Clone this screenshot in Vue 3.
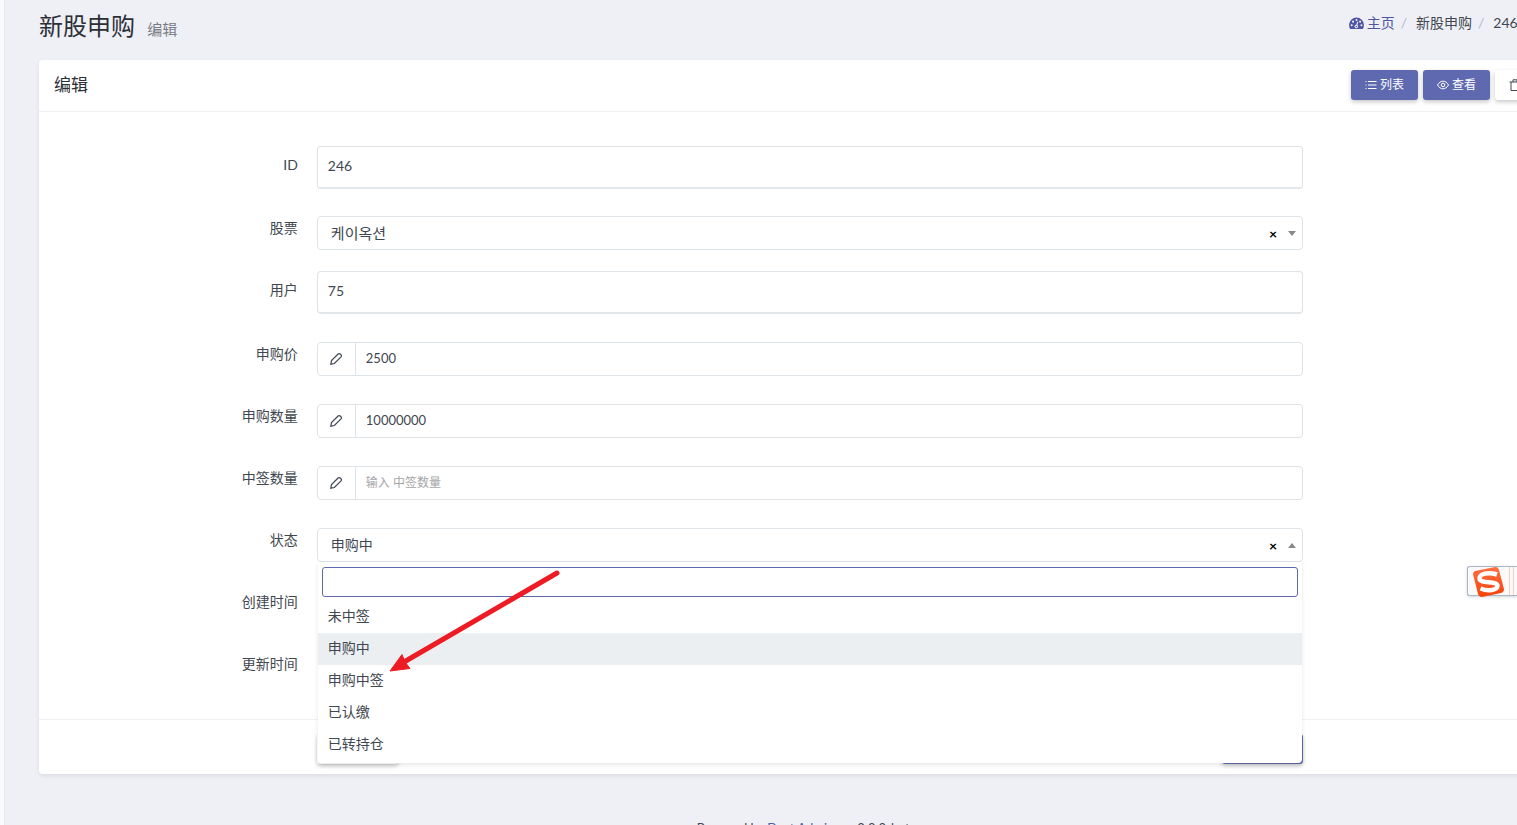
<script setup>
import { ref } from 'vue'

const stock = ref('케이옥션')
const status = ref('申购中')
const keyword = ref('')
const statuses = ['未中签', '申购中', '申购中签', '已认缴', '已转持仓']
const numbers = ref([
  { id: 'price', label: '申购价', value: '2500', hint: '输入 申购价' },
  { id: 'amount', label: '申购数量', value: '10000000', hint: '输入 申购数量' },
  { id: 'won', label: '中签数量', value: '', hint: '输入 中签数量' },
])
</script>

<template>
  <div class="page">
    <div class="content">
      <header class="page-head">
        <h1>新股申购 <small>编辑</small></h1>
        <nav class="crumbs">
          <a href="#">
            <svg class="dash" viewBox="0 0 16 14">
              <path fill="currentColor" d="M8 .5a8 8 0 0 0-8 8c0 1.800.5 3.300 1.300 4.500h13.400c.8-1.200 1.300-2.700 1.300-4.500a8 8 0 0 0-8-8z" />
              <g fill="#eff0f6">
                <circle cx="2.800" cy="8.800" r="1.100" /><circle cx="4.300" cy="5" r="1.100" /><circle cx="8" cy="3.200" r="1.100" />
                <circle cx="11.900" cy="5" r="1.100" /><circle cx="13.300" cy="8.800" r="1.100" /><circle cx="7.800" cy="10.300" r="1.900" />
              </g>
              <path d="M7.800 10.300 9.400 5" stroke="#eff0f6" stroke-width="1.200" />
              <circle cx="7.800" cy="10.300" r=".8" fill="currentColor" />
            </svg>
            主页</a>
          <i>/</i><span>新股申购</span><i>/</i><span>246</span><i>/</i><span>编辑</span>
        </nav>
      </header>

      <main class="card">
        <div class="card-head">
          <h2>编辑</h2>
          <div class="tools">
            <button type="button" class="btn primary">
              <svg viewBox="0 0 12 12" fill="none" stroke="currentColor"><path d="M3 2.500h8.500M3 6h8.500M3 9.500h8.500M.5 2.500h1M.5 6h1M.5 9.500h1" /></svg>
              列表
            </button>
            <button type="button" class="btn primary">
              <svg viewBox="0 0 12 12" fill="none" stroke="currentColor"><path d="M.5 6C2 3.500 3.800 2.200 6 2.200S10 3.500 11.500 6C10 8.500 8.200 9.800 6 9.800S2 8.500.5 6z" /><circle cx="6" cy="6" r="1.800" /></svg>
              查看
            </button>
            <button type="button" class="btn">
              <svg viewBox="0 0 12 12" fill="none" stroke="currentColor"><path d="M.5 3h11M2 3v8.500h8V3M4 3V.8h4V3" /></svg>
              删除
            </button>
          </div>
        </div>

        <form class="form" @submit.prevent>
          <div class="row tall">
            <span class="label">ID</span>
            <div class="field"><div class="static">246</div></div>
          </div>
          <div class="row close">
            <label class="label" for="stock">股票</label>
            <div class="field">
              <div class="select">
                <select id="stock" v-model="stock" class="korean"><option>케이옥션</option></select>
                <button type="button" class="clear" aria-label="清除股票">×</button>
                <span class="caret"></span>
              </div>
            </div>
          </div>
          <div class="row tall">
            <span class="label">用户</span>
            <div class="field"><div class="static">75</div></div>
          </div>
          <div v-for="n in numbers" :key="n.id" class="row">
            <label class="label" :for="n.id">{{ n.label }}</label>
            <div class="field">
              <div class="group">
                <span class="pen">
                  <svg viewBox="0 0 12 12" fill="none" stroke="currentColor" stroke-width="1.200"><path d="M8.100 1 1.500 7.600.8 11.200 4.400 10.500 11 3.900C11.600 3.200 11.500 2.400 10.900 1.700 10.100.8 9 .3 8.100 1z" /></svg>
                </span>
                <input :id="n.id" v-model="n.value" type="text" :placeholder="n.hint" />
              </div>
            </div>
          </div>
          <div class="row">
            <label class="label" for="status">状态</label>
            <div class="field">
              <div class="select">
                <select id="status" v-model="status"><option v-for="s in statuses" :key="s">{{ s }}</option></select>
                <button type="button" class="clear" aria-label="清除状态">×</button>
                <span class="caret up"></span>
                <div class="menu">
                  <div class="search"><input v-model="keyword" type="text" aria-label="搜索状态" /></div>
                  <ul role="listbox" aria-label="状态">
                    <li v-for="s in statuses" :key="s" role="option" :aria-selected="s === status" :class="{ on: s === status }">{{ s }}</li>
                  </ul>
                  <svg class="arrow" viewBox="0 0 176 108">
                    <path d="M169 6 16 95" stroke="#ed1c24" stroke-width="5" stroke-linecap="round" />
                    <path d="M2 104 14 87.500 17 95 22 101.500z" fill="#ed1c24" stroke="#ed1c24" />
                  </svg>
                </div>
              </div>
            </div>
          </div>
          <div class="row"><span class="label">创建时间</span><div class="field blank"></div></div>
          <div class="row"><span class="label">更新时间</span><div class="field blank"></div></div>
          <footer class="row actions">
            <div class="field">
              <button type="reset" class="btn" aria-label="重置"></button>
              <button type="submit" class="btn primary" aria-label="提交"></button>
            </div>
          </footer>
        </form>
      </main>

      <footer class="powered">Powered by <a href="#">Dcat Admin</a> &nbsp;·&nbsp; v2.0.0-beta</footer>
    </div>

    <aside class="ime">
      <svg viewBox="0 0 32 30">
        <defs><linearGradient id="flame" x1="0" y1="0" x2="0" y2="1"><stop offset="0" stop-color="#ff7043" /><stop offset="1" stop-color="#f4430a" /></linearGradient></defs>
        <path d="M3 4 23 0Q26-.5 27 3L32 22Q32 25 29 26L10 30Q7 30 6 27L1 7Q1 5 3 4z" fill="url(#flame)" />
        <path d="M25 7.500C16 4.500 7.500 7 7.500 11.500 7.500 17 25 13.500 25.500 18.500 25.500 23.500 16 24.500 8.500 21.500" fill="none" stroke="#fff" stroke-width="4.500" />
      </svg>
    </aside>
  </div>
</template>

<style>
body {
  background: #eff0f6;
}
</style>

<style scoped>
* {
  box-sizing: border-box;
}
.page {
  position: relative;
  height: 100vh;
  overflow: hidden;
  border-left: 4px solid #fafafc;
  background: #eff0f6;
  box-shadow: inset 1px 0 #e8e9f0;
  color: #414750;
  font: 14px/20px Lato, "Noto Sans CJK SC", "Noto Sans CJK KR", sans-serif;
}
button,
input,
select {
  font: inherit;
  color: inherit;
}
a {
  color: #4c60a3;
  text-decoration: none;
}
.content {
  margin-left: 35px;
  margin-right: -63px;
}
.page-head {
  display: flex;
  justify-content: space-between;
  height: 60px;
  padding: 8px 13px 0 0;
}
h1 {
  margin: 0;
  font-size: 24px;
  font-weight: 400;
  line-height: 36px;
  color: #2c2f36;
}
h1 small {
  margin-left: 6px;
  font-size: 15px;
  color: #777b82;
}
.crumbs {
  display: flex;
  padding-top: 5px;
}
.crumbs a {
  display: flex;
  gap: 3px;
  color: #4e55a2;
}
.dash {
  width: 15px;
  height: 13px;
  margin-top: 4px;
}
.crumbs i {
  margin: 0 9px 0 6px;
  font-style: normal;
  color: #b4b8c4;
}
.card {
  border-radius: 4px;
  background: #fff;
  box-shadow: 0 2px 4px rgba(0, 0, 0, 0.08);
}
.card-head {
  display: flex;
  justify-content: space-between;
  align-items: center;
  height: 52px;
  padding: 0 18px 2px 15px;
  border-bottom: 1px solid #f1f1f3;
}
h2 {
  margin: 0;
  font-size: 17px;
  font-weight: 400;
  color: #2c2f36;
}
.tools {
  display: flex;
  gap: 5px;
}
.btn {
  display: flex;
  align-items: center;
  justify-content: center;
  gap: 3px;
  width: 67px;
  height: 30px;
  padding: 0;
  border: 0;
  border-radius: 3px;
  background: #fff;
  box-shadow: 0 2px 4px rgba(0, 0, 0, 0.22);
  font-size: 12px;
}
.btn svg {
  width: 12px;
  height: 12px;
}
.primary {
  background: #5f69b0;
  color: #fff;
}
.form {
  padding-top: 34px;
}
.row {
  display: grid;
  grid-template-columns: 2fr 8fr 2fr;
  margin: 0 15px 28px;
}
.row:first-child {
  margin-bottom: 27px;
}
.row.close {
  margin-bottom: 21px;
}
.label {
  padding: 2px 8px 0 0;
  text-align: right;
}
.tall .label {
  padding-top: 9px;
}
.field {
  padding: 0 10px 0 11px;
}
.blank {
  height: 34px;
}
.static,
.select,
.group {
  border: 1px solid #dde3e6;
  border-radius: 4px;
  background: #fff;
}
.static {
  height: 43px;
  padding: 9px 10px;
  border-bottom: 2px solid #e4e7e9;
}
.select {
  position: relative;
  height: 34px;
}
select {
  width: 100%;
  height: 32px;
  padding: 0 50px 0 13px;
  border: 0;
  outline: 0;
  appearance: none;
  background: transparent;
}
.korean {
  font-size: 15px;
}
.clear {
  position: absolute;
  top: 7px;
  right: 24px;
  width: 10px;
  padding: 0;
  border: 0;
  background: none;
  color: #000;
  font-weight: 700;
  line-height: 20px;
}
.caret {
  position: absolute;
  top: 14px;
  right: 6px;
  border: 4px solid transparent;
  border-top: 5px solid #888;
  border-bottom: 0;
}
.caret.up {
  border-top: 0;
  border-bottom: 5px solid #888;
}
.group {
  display: flex;
  height: 34px;
}
.pen {
  display: flex;
  align-items: center;
  justify-content: center;
  width: 38px;
  border-right: 1px solid #dde3e6;
}
.pen svg {
  width: 12px;
  height: 12px;
}
.group input {
  flex: 1;
  min-width: 0;
  padding: 0 10px 2px;
  border: 0;
  outline: 0;
  background: transparent;
  font-size: 13px;
}
.group input::placeholder {
  font-size: 12px;
  color: #a5a5a8;
  opacity: 1;
}
.menu {
  position: absolute;
  z-index: 2;
  top: 33px;
  left: 0;
  right: 0;
  padding-bottom: 2px;
  border-radius: 0 0 4px 4px;
  background: #fff;
  box-shadow: 0 2px 4px rgba(0, 0, 0, 0.1);
}
.search {
  padding: 5px 4px 4px;
}
.search input {
  display: block;
  width: 100%;
  height: 30px;
  padding: 0 8px;
  border: 1px solid #5f69b0;
  border-radius: 3px;
  outline: 0;
}
ul {
  margin: 0;
  padding: 0;
  list-style: none;
}
li {
  padding: 5px 10px 7px;
}
li.on {
  background: #ebeff2;
}
.arrow {
  position: absolute;
  top: 5px;
  left: 70px;
  width: 176px;
  height: 108px;
}
.actions {
  margin: 33px 0 0;
  padding: 14px 15px 10px;
  border-top: 1px solid #f1f1f3;
}
.actions .field {
  grid-column: 2;
  display: flex;
  justify-content: space-between;
}
.actions .btn {
  width: 81px;
}
.powered {
  padding-top: 44px;
  margin-right: 6px;
  font-size: 13px;
  text-align: center;
}
.ime {
  position: absolute;
  top: 566px;
  right: 0;
  width: 50px;
  height: 30px;
  padding: 0 4px;
  border: 1px solid #aab7c4;
  border-right: 0;
  border-radius: 3px 0 0 3px;
  background: linear-gradient(90deg, transparent 41px, #f9cdbf 41px, #f9cdbf 42px, transparent 42px, transparent 45px, #f9cdbf 45px, #f9cdbf 46px, transparent 46px), #fafafa;
  box-shadow: 0 1px 3px rgba(60, 80, 100, 0.25);
}
.ime svg {
  width: 32px;
  height: 30px;
  overflow: visible;
}
</style>
